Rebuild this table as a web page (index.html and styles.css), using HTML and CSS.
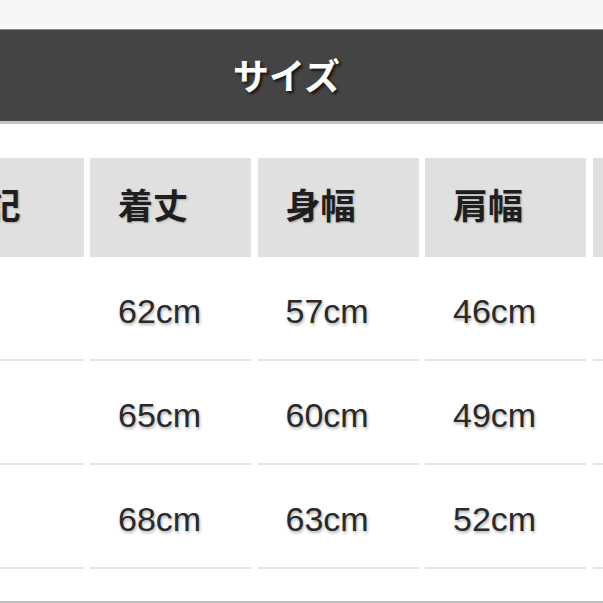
FILE: index.html
```html
<!DOCTYPE html>
<html lang="ja">
<head>
<meta charset="utf-8">
<title>サイズ</title>
<link rel="stylesheet" href="styles.css">
</head>
<body>
<div class="page">
  <div class="topband"></div>
  <div class="titlebar"><h1 class="title">サイズ</h1></div>
  <div class="table">
    <div class="row head">
      <div class="cell">表記</div>
      <div class="cell">着丈</div>
      <div class="cell">身幅</div>
      <div class="cell">肩幅</div>
      <div class="cell"></div>
    </div>
    <div class="row">
      <div class="cell"></div>
      <div class="cell">62cm</div>
      <div class="cell">57cm</div>
      <div class="cell">46cm</div>
      <div class="cell"></div>
    </div>
    <div class="row">
      <div class="cell"></div>
      <div class="cell">65cm</div>
      <div class="cell">60cm</div>
      <div class="cell">49cm</div>
      <div class="cell"></div>
    </div>
    <div class="row">
      <div class="cell"></div>
      <div class="cell">68cm</div>
      <div class="cell">63cm</div>
      <div class="cell">52cm</div>
      <div class="cell"></div>
    </div>
  </div>
  <div class="bottomline"></div>
</div>
</body>
</html>
```

FILE: styles.css
```css
html, body {
  margin: 0;
  padding: 0;
  background: #ffffff;
  overflow: hidden;
}

.page {
  width: 603px;
  height: 603px;
  overflow: hidden;
  background: #ffffff;
}

.topband {
  height: 25px;
  background: #f5f5f5;
  border-bottom: 4px solid #fbfbfb;
}

.titlebar {
  height: 91px;
  background: #444444;
  border-top: 1px solid #8a8a8a;
  border-bottom: 3px solid #c4c4c4;
  display: flex;
  align-items: center;
  justify-content: center;
  padding-right: 30px;
  box-sizing: content-box;
}

.title {
  margin: 0 0 4px 0;
  font-family: "Noto Sans CJK JP", "Noto Sans", sans-serif;
  font-weight: 700;
  font-size: 36px;
  line-height: 1;
  color: #ffffff;
  text-shadow: 2px 2px 3px rgba(0, 0, 0, 0.75);
}

.table {
  margin-top: 34px;
  margin-left: -77.5px;
  display: flex;
  flex-direction: column;
}

.row {
  display: flex;
  gap: 6.5px;
}

.cell {
  flex: 0 0 161px;
  box-sizing: border-box;
  height: 104px;
  padding: 7px 0 0 28px;
  display: flex;
  align-items: center;
  border-bottom: 2px solid #e4e4e4;
  font-family: "Liberation Sans", Arial, sans-serif;
  font-size: 34px;
  color: #2a2a2a;
  text-shadow: 1px 2px 3px rgba(0, 0, 0, 0.3);
  white-space: nowrap;
}

.head .cell {
  height: 99px;
  padding: 0 0 9px 28px;
  background: #e0e0e0;
  border-bottom: none;
  font-family: "Noto Sans CJK JP", "Noto Sans", sans-serif;
  font-weight: 700;
  font-size: 35px;
  color: #1e1e1e;
  text-shadow: 1px 1px 2px rgba(0, 0, 0, 0.25);
}

.bottomline {
  margin-top: 32px;
  height: 2px;
  background: #c0c0c0;
}
```
